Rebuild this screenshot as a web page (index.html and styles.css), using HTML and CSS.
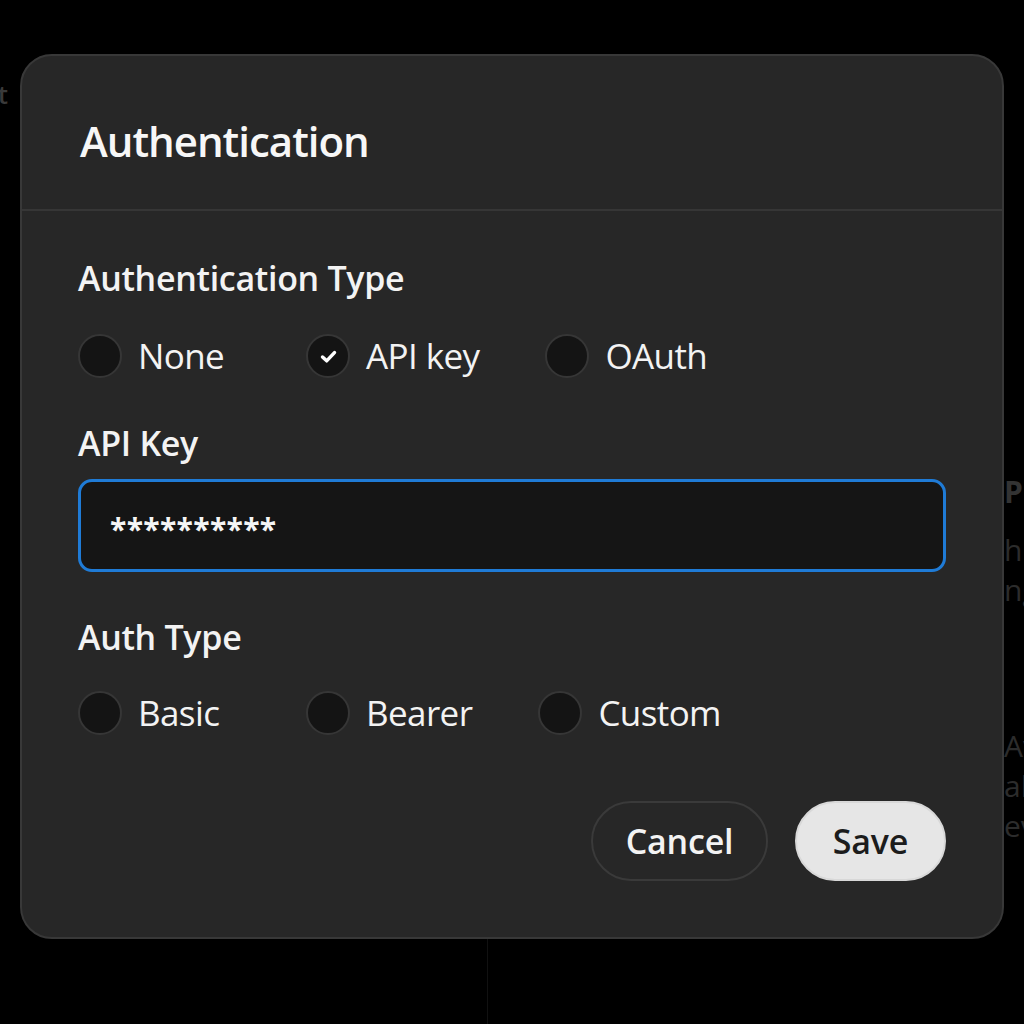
FILE: index.html
```html
<!DOCTYPE html>
<html lang="en">
<head>
<meta charset="utf-8">
<title>Authentication</title>
<link rel="stylesheet" href="styles.css">
</head>
<body>
<div class="backdrop">
  <div class="bg-left"><span class="bg-word">Project</span></div>
  <div class="bg-mid"><div class="bg-rule"></div></div>
  <div class="bg-right">
    <div class="bg-heading">Pr</div>
    <div class="bg-line">hi</div>
    <div class="bg-line">ng</div>
    <div class="bg-line bg-gap">Av</div>
    <div class="bg-line">al</div>
    <div class="bg-line">ev</div>
  </div>
</div>

<div class="dialog" role="dialog" aria-label="Authentication">
  <div class="dialog-header">
    <h1 class="dialog-title">Authentication</h1>
  </div>
  <div class="dialog-body">
    <div class="field-label first">Authentication Type</div>
    <div class="radio-row">
      <label class="option"><span class="radio"></span><span class="option-text">None</span></label>
      <label class="option"><span class="radio checked"><svg viewBox="0 0 20 20" width="23" height="23"><path d="M4.8 10.4 L8.4 13.8 L15.2 6.6" fill="none" stroke="#ffffff" stroke-width="3" stroke-linecap="round" stroke-linejoin="round"/></svg></span><span class="option-text">API key</span></label>
      <label class="option"><span class="radio"></span><span class="option-text">OAuth</span></label>
    </div>

    <div class="field-label second">API Key</div>
    <div class="text-input"><span class="masked">**********</span></div>

    <div class="field-label third">Auth Type</div>
    <div class="radio-row">
      <label class="option"><span class="radio"></span><span class="option-text">Basic</span></label>
      <label class="option"><span class="radio"></span><span class="option-text">Bearer</span></label>
      <label class="option"><span class="radio"></span><span class="option-text">Custom</span></label>
    </div>

    <div class="actions">
      <button class="btn btn-cancel">Cancel</button>
      <button class="btn btn-save">Save</button>
    </div>
  </div>
</div>
</body>
</html>
```

FILE: styles.css
```css
* { box-sizing: border-box; }

html, body {
  margin: 0;
  padding: 0;
  width: 1024px;
  height: 1024px;
  background: #000000;
  overflow: hidden;
  font-family: "Open Sans", "Noto Sans", sans-serif;
  color: #f3f3f3;
}

.backdrop {
  display: flex;
  width: 1024px;
  height: 1024px;
}

.bg-left {
  width: 8px;
  overflow: hidden;
  display: flex;
  justify-content: flex-end;
  padding-top: 78px;
}
.bg-word {
  font-size: 26px;
  font-weight: 600;
  color: #3a3a3a;
  white-space: nowrap;
  line-height: 32px;
}

.bg-mid {
  width: 480px;
  display: flex;
  flex-direction: column;
  justify-content: flex-end;
}
.bg-rule {
  height: 90px;
  border-right: 1px solid #111111;
}

.bg-right {
  margin-left: 516px;
  width: 20px;
  overflow: hidden;
  padding-top: 472px;
  color: #2c2c2c;
  font-size: 30px;
  white-space: nowrap;
}
.bg-heading {
  font-weight: 700;
  line-height: 40px;
  margin-bottom: 18px;
  color: #333333;
}
.bg-line {
  line-height: 40px;
}
.bg-gap { margin-top: 116px; }

.dialog {
  position: absolute;
  left: 20px;
  top: 54px;
  width: 984px;
  height: 885px;
  background: #272727;
  border: 2px solid #383838;
  border-radius: 32px;
  display: flex;
  flex-direction: column;
}

.dialog-header {
  height: 155px;
  border-bottom: 2px solid #363636;
  padding: 65px 0 0 58px;
}
.dialog-title {
  margin: 0;
  font-size: 42px;
  font-weight: 600;
  letter-spacing: -1px;
  line-height: 40px;
  color: #f7f7f7;
}

.dialog-body {
  padding: 0 56px 0 56px;
  display: flex;
  flex-direction: column;
}

.field-label {
  font-size: 34px;
  font-weight: 600;
  line-height: 40px;
  letter-spacing: -0.3px;
  color: #f3f3f3;
}
.field-label.first { margin-top: 47px; margin-bottom: 36px; }
.field-label.second { margin-top: 45px; margin-bottom: 16px; }
.field-label.third { margin-top: 45px; margin-bottom: 34px; }

.radio-row {
  display: flex;
  gap: 66px;
  height: 44px;
  align-items: center;
}

.option {
  display: flex;
  align-items: center;
  gap: 16px;
  min-width: 162px;
}

.radio {
  width: 44px;
  height: 44px;
  border-radius: 50%;
  background: #141414;
  border: 2px solid #363636;
  display: flex;
  align-items: center;
  justify-content: center;
  flex-shrink: 0;
}

.option-text {
  font-size: 35px;
  line-height: 44px;
  letter-spacing: -0.6px;
  color: #f3f3f3;
}

.text-input {
  height: 93px;
  border: 3px solid #1f7bd6;
  border-radius: 14px;
  background: #151515;
  display: flex;
  align-items: center;
  padding-left: 29px;
}
.masked {
  font-size: 30px;
  font-weight: 700;
  letter-spacing: 0.3px;
  color: #f5f5f5;
  line-height: 30px;
  padding-top: 7px;
}

.actions {
  margin-top: 66px;
  display: flex;
  justify-content: flex-end;
  gap: 27px;
}

.btn {
  height: 80px;
  border-radius: 40px;
  font-family: "Open Sans", "Noto Sans", sans-serif;
  font-size: 34px;
  font-weight: 600;
  letter-spacing: -0.2px;
  padding: 0;
  display: flex;
  align-items: center;
  justify-content: center;
}
.btn-cancel {
  width: 177px;
  background: transparent;
  color: #f3f3f3;
  border: 2px solid #3a3a3a;
}
.btn-save {
  width: 151px;
  background: #e6e6e6;
  color: #1c1c1c;
  border: 2px solid #d8d8d8;
}
```
